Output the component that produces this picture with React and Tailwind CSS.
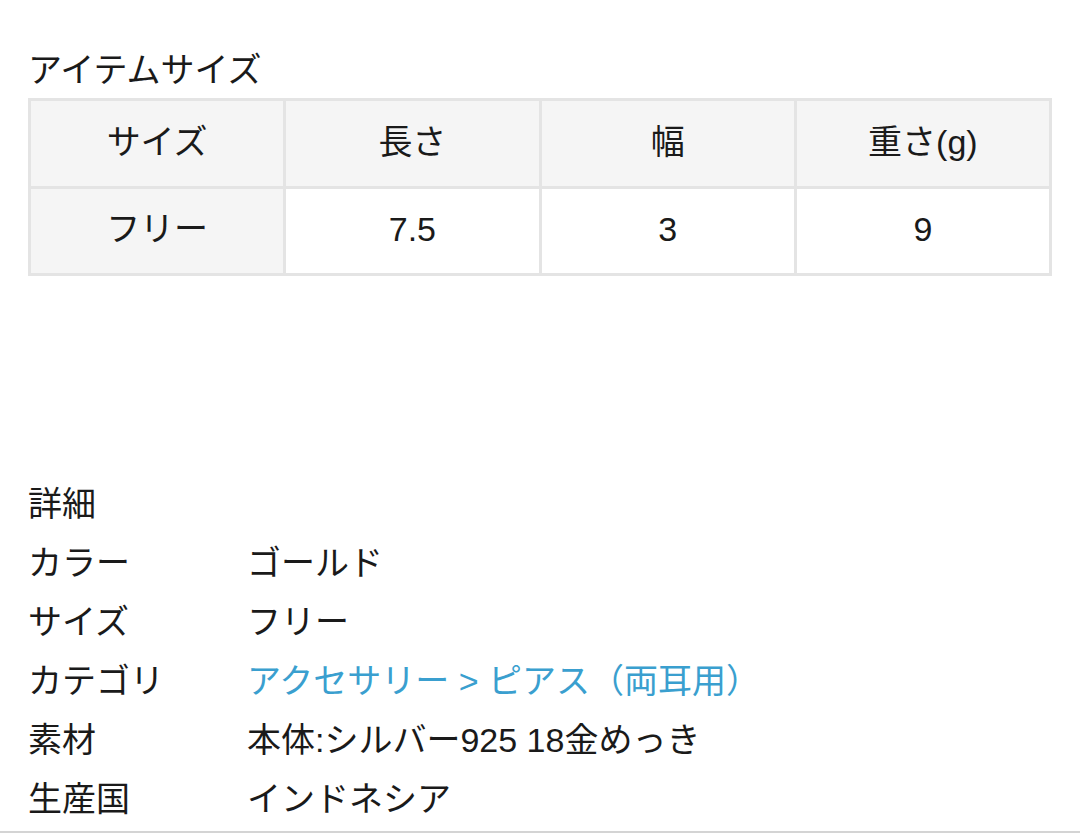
const sizeHeaders = ["サイズ", "長さ", "幅", "重さ(g)"];
const sizeRow = ["フリー", "7.5", "3", "9"];

const details = [
  { label: "カラー", value: "ゴールド" },
  { label: "サイズ", value: "フリー" },
  { label: "カテゴリ", value: "アクセサリー > ピアス（両耳用）", link: true },
  { label: "素材", value: "本体:シルバー925 18金めっき" },
  { label: "生産国", value: "インドネシア" },
];

const App = () => {
  return (
    <main
      className="h-[833px] w-[1080px] overflow-hidden bg-white text-[#1a1a1a]"
      style={{ fontFamily: '"Liberation Sans", "Noto Sans CJK JP", sans-serif' }}
    >
      <div className="flex h-full flex-col border-b-2 border-[#d4d4d4] pl-[28px] pt-[48px]">
        {/* Item size */}
        <h2 className="text-[34px] leading-[44px] font-normal">アイテムサイズ</h2>

        <table className="mt-[6px] w-[1024px] table-fixed border-collapse text-[34px]">
          <tbody>
            <tr className="h-[88px] bg-[#f5f5f5]">
              {sizeHeaders.map((h) => (
                <th
                  key={h}
                  className="border-[3px] border-[#e4e4e4] pb-[2px] text-center font-normal"
                >
                  {h}
                </th>
              ))}
            </tr>
            <tr className="h-[87px]">
              {sizeRow.map((v, i) => (
                <td
                  key={i}
                  className={`border-[3px] border-[#e4e4e4] pb-[4px] text-center ${
                    i === 0 ? "bg-[#f5f5f5]" : "bg-white"
                  }`}
                >
                  {v}
                </td>
              ))}
            </tr>
          </tbody>
        </table>

        {/* Details */}
        <div className="mt-[199px] flex flex-col text-[34px] leading-[59px]">
          <h3 className="font-normal">詳細</h3>
          {details.map((d) => (
            <div key={d.label} className="flex">
              <span className="w-[219px] shrink-0">{d.label}</span>
              <span className={d.link ? "text-[#3a9fcf]" : ""}>{d.value}</span>
            </div>
          ))}
        </div>
      </div>
    </main>
  );
};

export default App;
